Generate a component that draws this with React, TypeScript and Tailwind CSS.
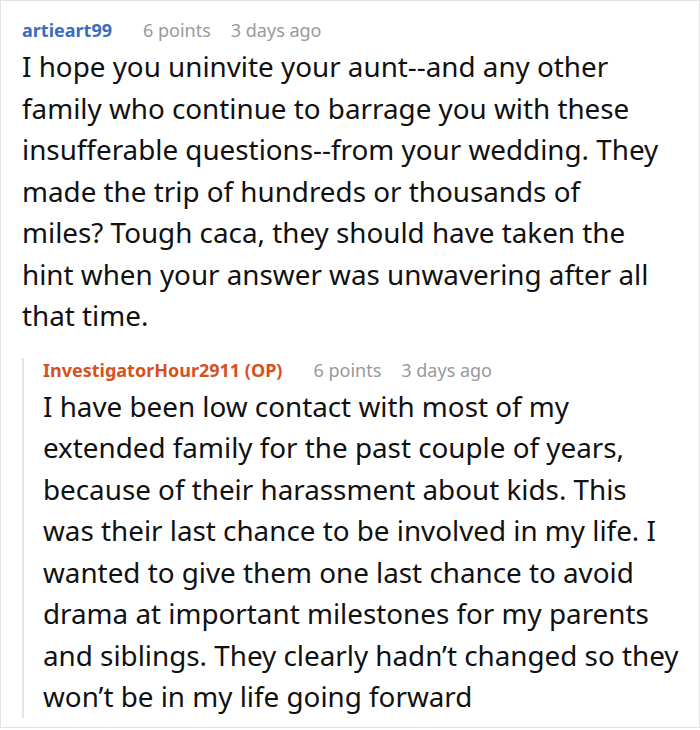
import React from 'react';

const font = { fontFamily: '"Noto Sans", "Open Sans", sans-serif' };

const first = [
  'I hope you uninvite your aunt--and any other',
  'family who continue to barrage you with these',
  'insufferable questions--from your wedding. They',
  'made the trip of hundreds or thousands of',
  'miles? Tough caca, they should have taken the',
  'hint when your answer was unwavering after all',
  'that time.',
];

const reply = [
  'I have been low contact with most of my',
  'extended family for the past couple of years,',
  'because of their harassment about kids. This',
  'was their last chance to be involved in my life. I',
  'wanted to give them one last chance to avoid',
  'drama at important milestones for my parents',
  'and siblings. They clearly hadn’t changed so they',
  'won’t be in my life going forward',
];

function Meta({ name, color }: { name: string; color: string }) {
  return (
    <div className="flex items-center text-[18px] leading-[24px]">
      <span className={`font-bold ${color}`}>{name}</span>
      <span className="text-[#999999] ml-[31px]">6 points</span>
      <span className="text-[#999999] ml-[20px]">3 days ago</span>
    </div>
  );
}

function Body({ lines }: { lines: string[] }) {
  return (
    <p className="text-[27.8px] leading-[41.5px] text-[#111]">
      {lines.map((l, i) => (
        <span key={i} className="block whitespace-nowrap">{l}</span>
      ))}
    </p>
  );
}

export default function App() {
  return (
    <div style={font} className="w-[700px] h-[728px] bg-white border border-[#e3e3e3] pl-[21px] pr-3 pt-[17px] overflow-hidden">
      <Meta name="artieart99" color="text-[#3b6dbd]" />
      <div className="mt-[4px]">
        <Body lines={first} />
      </div>
      <div className="mt-[21px] border-l-2 border-[#e3e3e3] pl-[19px]">
        <Meta name="InvestigatorHour2911 (OP)" color="text-[#d4521f]" />
        <div className="mt-[4px] mb-[-6px]">
          <Body lines={reply} />
        </div>
      </div>
    </div>
  );
}
